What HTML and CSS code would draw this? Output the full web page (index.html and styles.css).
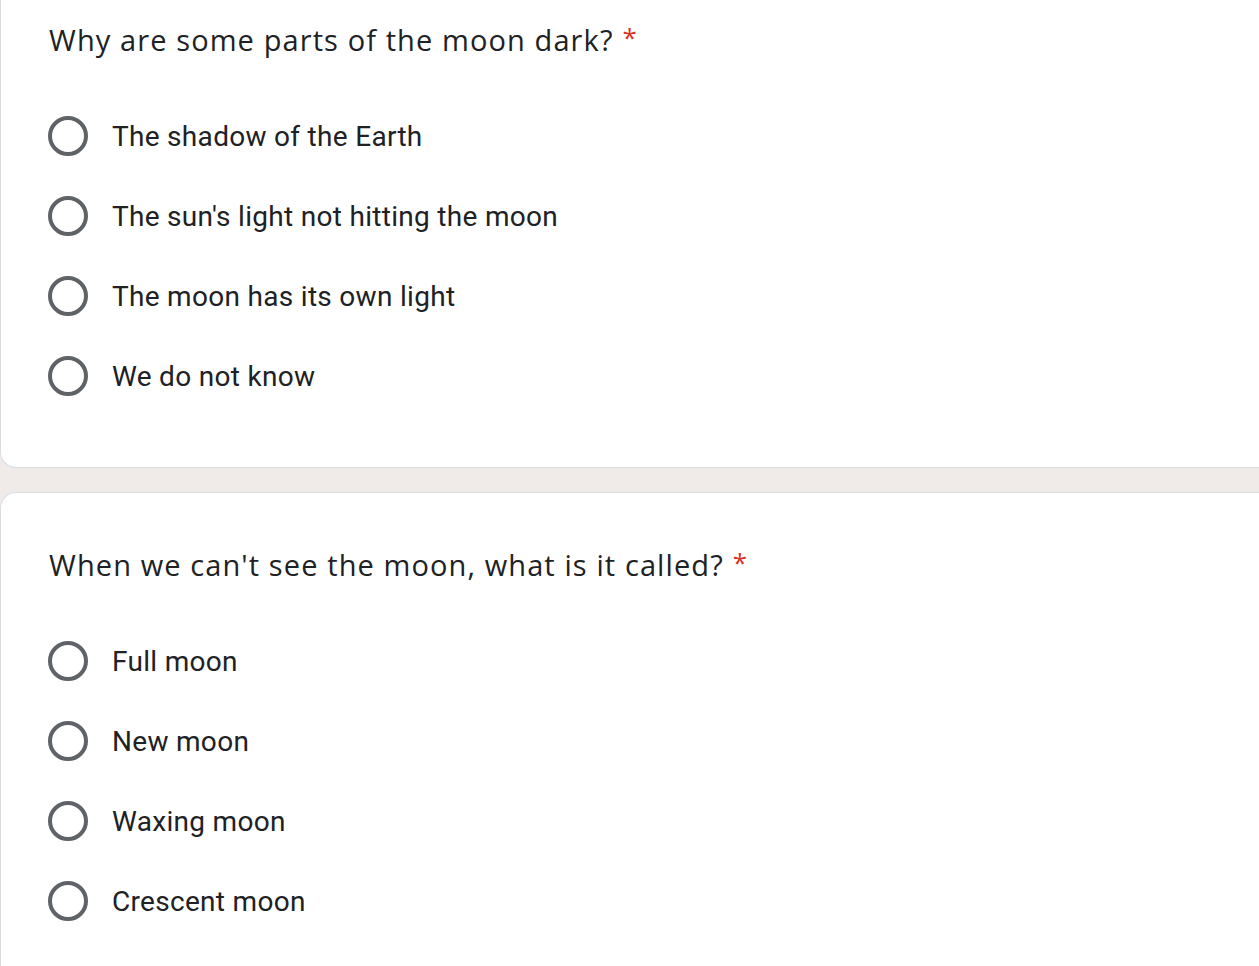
FILE: index.html
```html
<!DOCTYPE html>
<html>
<head>
<meta charset="utf-8">
<link rel="stylesheet" href="styles.css">
</head>
<body>
<div class="page">
  <div class="card">
    <div class="question">Why are some parts of the moon dark?<span class="req">*</span></div>
    <div class="options">
      <div class="option"><span class="radio"></span><span class="label">The shadow of the Earth</span></div>
      <div class="option"><span class="radio"></span><span class="label">The sun's light not hitting the moon</span></div>
      <div class="option"><span class="radio"></span><span class="label">The moon has its own light</span></div>
      <div class="option"><span class="radio"></span><span class="label">We do not know</span></div>
    </div>
  </div>
  <div class="card">
    <div class="question">When we can't see the moon, what is it called?<span class="req">*</span></div>
    <div class="options">
      <div class="option"><span class="radio"></span><span class="label">Full moon</span></div>
      <div class="option"><span class="radio"></span><span class="label">New moon</span></div>
      <div class="option"><span class="radio"></span><span class="label">Waxing moon</span></div>
      <div class="option"><span class="radio"></span><span class="label">Crescent moon</span></div>
    </div>
  </div>
</div>
</body>
</html>
```
FILE: styles.css
```css
html, body {
  margin: 0;
  padding: 0;
  background: #f0ebe8;
  overflow: hidden;
}
.page {
  margin-top: -33px;
  display: flex;
  flex-direction: column;
  gap: 24px;
}
.card {
  background: #fff;
  border: 1.5px solid #dadce0;
  border-right: none;
  border-radius: 16px 0 0 16px;
  margin-right: -20px;
  padding: 49px 0 51px 48px;
}
.question {
  font-family: "Open Sans", Roboto, sans-serif;
  font-size: 29px;
  line-height: 40px;
  color: #202124;
  letter-spacing: 1.1px;
}
.req {
  color: #d93025;
  font-size: 26px;
  padding-left: 9px;
  vertical-align: 4px;
  letter-spacing: 0;
}
.options {
  margin-top: 36px;
  display: flex;
  flex-direction: column;
}
.option {
  height: 80px;
  display: flex;
  align-items: center;
}
.radio {
  width: 32px;
  height: 32px;
  border: 4px solid #5f6368;
  border-radius: 50%;
  box-sizing: content-box;
  margin-left: -1px;
}
.label {
  margin-left: 24px;
  font-family: Roboto, "Noto Sans", sans-serif;
  font-size: 28px;
  color: #202124;
  letter-spacing: 0.3px;
}
```
